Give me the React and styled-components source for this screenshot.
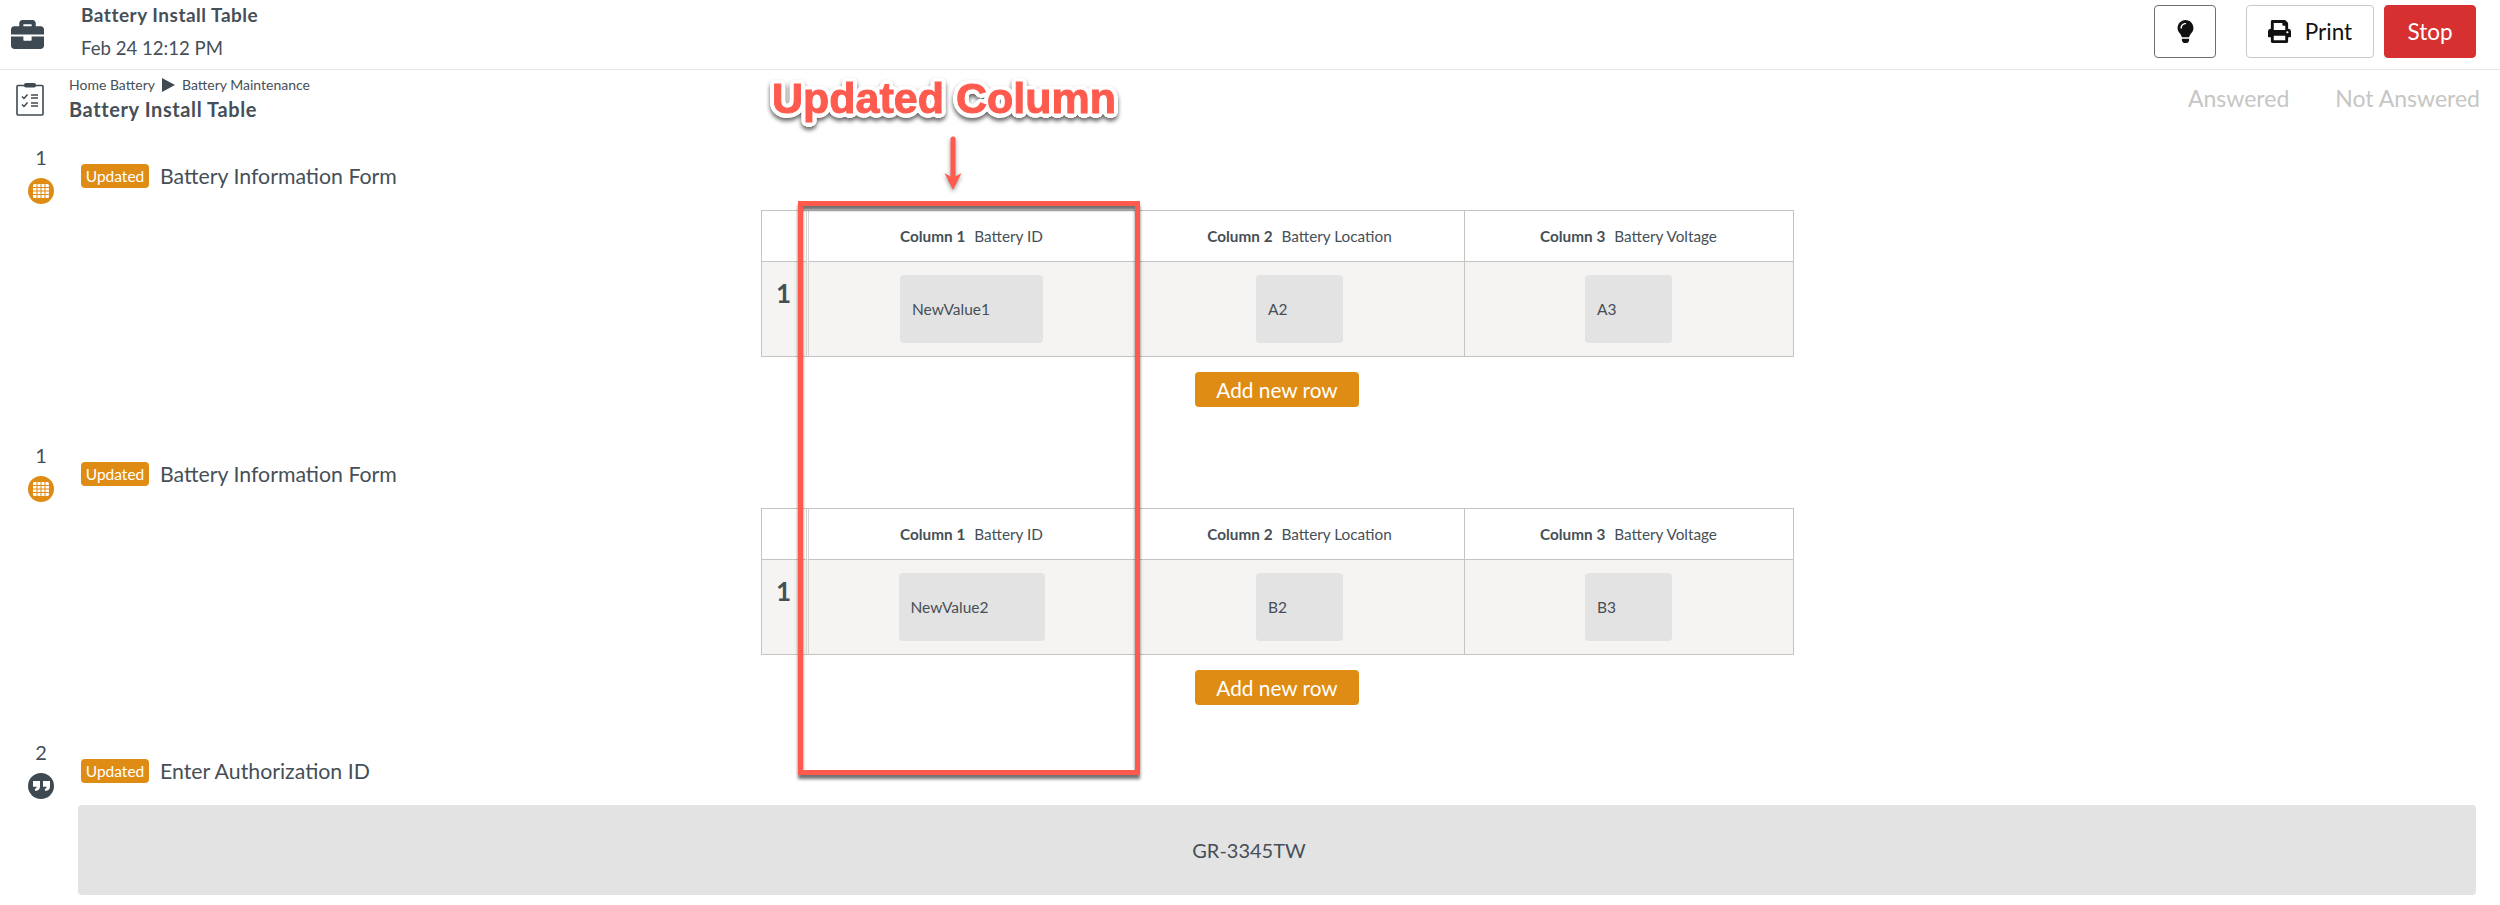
import React from 'react'
import styled, { createGlobalStyle } from 'styled-components'
import { FaBriefcase, FaLightbulb, FaPrint } from 'react-icons/fa'

const GlobalStyle = createGlobalStyle`
    html, body {
        margin: 0;
        padding: 0;
        background: #fff;
    }
    body {
        font-family: 'Lato', 'Liberation Sans', sans-serif;
        color: #464f57;
        overflow: hidden;
    }
`

const Page = styled.div`
    position: relative;
    width: 2500px;
    height: 905px;
`

const Header = styled.header`
    display: flex;
    align-items: center;
    height: 69px;
    border-bottom: 1px solid #e6e6e6;
    padding: 0 24px 0 11px;
`
const HeaderIcon = styled(FaBriefcase)`
    width: 33px;
    height: 33px;
    color: #3f4952;
    margin-right: 37px;
`
const HeaderText = styled.div`
    display: flex;
    flex-direction: column;
    gap: 13px;
    flex: 1;
    margin-top: -6px;
`
const HeaderTitle = styled.div`
    font-size: 19px;
    letter-spacing: 0.5px;
    line-height: 21px;
    font-weight: 700;
`
const HeaderDate = styled.div`
    font-size: 18.6px;
    line-height: 21px;
`
const Actions = styled.div`
    display: flex;
    align-items: center;
    margin-top: -6px;
`
const Button = styled.button`
    display: flex;
    align-items: center;
    justify-content: center;
    gap: 14px;
    height: 53px;
    width: ${p => p.$width}px;
    margin-left: ${p => p.$gap}px;
    box-sizing: border-box;
    border-radius: 4px;
    border: 1px solid ${p => p.$border};
    background: ${p => p.$bg || '#fff'};
    color: ${p => p.$color || '#111'};
    font-family: inherit;
    font-size: 22.5px;
    padding: 0;
`

const SubHeader = styled.div`
    display: flex;
    height: 75px;
    padding: 6px 20px 0 16px;
    box-sizing: border-box;
`
const ChecklistIcon = styled.svg`
    width: 28px;
    height: 34px;
    margin: 6px 25px 0 0;
`
const SubText = styled.div`
    flex: 1;
`
const Crumbs = styled.div`
    display: flex;
    align-items: center;
    gap: 7px;
    font-size: 14px;
    line-height: 17px;
`
const CrumbArrow = styled.span`
    width: 0;
    height: 0;
    border-left: 13px solid #3f4952;
    border-top: 7px solid transparent;
    border-bottom: 7px solid transparent;
`
const SubTitle = styled.div`
    font-size: 20px;
    letter-spacing: 0.6px;
    line-height: 24px;
    font-weight: 700;
    margin-top: 4px;
`
const Legend = styled.div`
    display: flex;
    gap: 46px;
    font-size: 23px;
    color: #c6c6c4;
    padding-top: 8px;
`

const Question = styled.section`
    display: flex;
    padding: 0 24px 0 4px;
    height: ${p => p.$height}px;
`
const Marker = styled.div`
    width: 74px;
    flex-shrink: 0;
    display: flex;
    flex-direction: column;
    align-items: center;
`
const Number = styled.div`
    font-size: 20px;
    line-height: 24px;
`
const Circle = styled.div`
    width: 26px;
    height: 26px;
    margin-top: 9px;
    border-radius: 50%;
    display: flex;
    align-items: center;
    justify-content: center;
    background: ${p => p.$bg};
`
const Content = styled.div`
    flex: 1;
    min-width: 0;
    padding-top: 19px;
`
const TitleRow = styled.div`
    display: flex;
    align-items: center;
    height: 24px;
    padding-left: 3px;
    gap: 11px;
`
const Badge = styled.span`
    background: #df8c14;
    color: #fff;
    border-radius: 4px;
    width: 68px;
    height: 24px;
    display: flex;
    align-items: center;
    justify-content: center;
    font-size: 15.5px;
`
const QuestionTitle = styled.span`
    font-size: 21.3px;
`
const Table = styled.div`
    display: grid;
    grid-template-columns: 44px repeat(3, 1fr);
    grid-template-rows: 51px 94px;
    width: 1033px;
    margin: 22px auto 0;
    box-sizing: border-box;
    border: 1px solid #c4c4c0;
`
const HeadCell = styled.div`
    display: flex;
    align-items: center;
    justify-content: center;
    gap: 9px;
    font-size: 15.3px;
    border-bottom: 1px solid #c4c4c0;
    border-left: ${p => p.$double ? '3px double #d6d6d2' : p.$first ? 'none' : '1px solid #c4c4c0'};
`
const ColumnName = styled.strong`
    font-weight: 700;
`
const RowNumber = styled.div`
    background: #f5f4f2;
    font-size: 26px;
    font-weight: 700;
    text-align: center;
    padding-top: 15px;
`
const BodyCell = styled.div`
    background: #f5f4f2;
    display: flex;
    justify-content: center;
    padding-top: 13px;
    border-left: ${p => p.$double ? '3px double #d6d6d2' : '1px solid #c4c4c0'};
`
const ValueInput = styled.div`
    width: ${p => p.$width}px;
    height: 68px;
    box-sizing: border-box;
    background: #e3e3e3;
    border-radius: 4px;
    padding-left: 12px;
    display: flex;
    align-items: center;
    font-size: 15.5px;
`
const AddButton = styled.button`
    display: block;
    width: 164px;
    height: 35px;
    margin: 15px auto 0;
    border: none;
    border-radius: 4px;
    background: #df8c14;
    color: #fff;
    font-family: inherit;
    font-size: 20.8px;
    padding: 0;
`
const AnswerBox = styled.div`
    height: 90px;
    margin-top: 22px;
    padding-right: 56px;
    background: #e3e3e3;
    border-radius: 4px;
    display: flex;
    align-items: center;
    justify-content: center;
    font-size: 20px;
`

// white outline of the annotation text, drawn all round the letters
const outline = Array.from({ length: 24 }, (_, i) => {
    const a = (i / 24) * 2 * Math.PI
    return `${(Math.cos(a) * 4.5).toFixed(2)}px ${(Math.sin(a) * 4.5).toFixed(2)}px 0 #fff`
}).join(', ')

// screenshot annotation, sits over the page
const CalloutText = styled.div`
    position: absolute;
    left: 772px;
    top: 73px;
    font-family: 'Liberation Sans', Arial, sans-serif;
    font-weight: 700;
    font-size: 43px;
    line-height: 50px;
    color: #fe5a4e;
    -webkit-text-stroke: 1px #fe5a4e;
    text-shadow: ${outline};
    filter: drop-shadow(0 3px 2px rgba(0, 0, 0, 0.6));
`
const CalloutArrow = styled.svg`
    position: absolute;
    left: 941px;
    top: 136px;
    width: 24px;
    height: 58px;
    filter: drop-shadow(0 2px 2px rgba(0, 0, 0, 0.4));
`
const CalloutBox = styled.div`
    position: absolute;
    left: 798px;
    top: 201px;
    width: 342px;
    height: 574px;
    box-sizing: border-box;
    border: 5px solid #fe5a4e;
    box-shadow: 0 4px 3px rgba(0, 0, 0, 0.55), inset 0 4px 3px rgba(0, 0, 0, 0.55);
`

function Checklist() {
    return (
        <ChecklistIcon viewBox="0 0 28 34" fill="none" stroke="#3f4952">
            <rect x="1" y="3.5" width="26" height="29.5" rx="1" strokeWidth="1.6" />
            <rect x="8" y="1" width="12" height="4.5" rx="2" fill="#3f4952" strokeWidth="0" />
            <path d="M6 14.5l2 2 3.5-4M6 22.5l2 2 3.5-4" strokeWidth="1.5" />
            <path d="M15 13h7M15 16h7M15 21h7M15 24h7" strokeWidth="1.5" />
        </ChecklistIcon>
    )
}

function GridIcon() {
    return (
        <svg width="16" height="14" viewBox="0 0 16 14">
            <rect width="16" height="14" rx="1.5" fill="#fff" />
            <path d="M4 0v14M8 0v14M12 0v14M0 3.5h16M0 7h16M0 10.5h16" stroke="#df8c14" strokeWidth="1" />
        </svg>
    )
}

function QuoteIcon() {
    const mark = 'M0 0h7v5.5c0 2.6-1.7 4.3-4.6 4.5L1.6 8c1.3-.2 2-.9 2.1-2.2H0z'
    return (
        <svg width="17" height="10" viewBox="0 0 17 10" fill="#fff">
            <path d={mark} />
            <path d={mark} transform="translate(10 0)" />
        </svg>
    )
}

function BatteryTable({ values }) {
    const names = ['Battery ID', 'Battery Location', 'Battery Voltage']
    return (
        <>
            <Table>
                <HeadCell $first />
                {names.map((name, i) => (
                    <HeadCell key={name} $double={i === 0}>
                        <ColumnName>Column {i + 1}</ColumnName> {name}
                    </HeadCell>
                ))}
                <RowNumber>1</RowNumber>
                {values.map((v, i) => (
                    <BodyCell key={v.text} $double={i === 0}>
                        <ValueInput $width={v.width}>{v.text}</ValueInput>
                    </BodyCell>
                ))}
            </Table>
            <AddButton>Add new row</AddButton>
        </>
    )
}

function TitleLine({ children }) {
    return (
        <TitleRow>
            <Badge>Updated</Badge>
            <QuestionTitle>{children}</QuestionTitle>
        </TitleRow>
    )
}

export default function App() {
    return (
        <Page>
            <GlobalStyle />
            <Header>
                <HeaderIcon />
                <HeaderText>
                    <HeaderTitle>Battery Install Table</HeaderTitle>
                    <HeaderDate>Feb 24 12:12 PM</HeaderDate>
                </HeaderText>
                <Actions>
                    <Button $width={62} $gap={0} $border="#6e6e6e"><FaLightbulb size={23} /></Button>
                    <Button $width={128} $gap={30} $border="#c9c9c5"><FaPrint size={23} />Print</Button>
                    <Button $width={92} $gap={10} $border="#d63031" $bg="#d63031" $color="#fff">Stop</Button>
                </Actions>
            </Header>
            <SubHeader>
                <Checklist />
                <SubText>
                    <Crumbs>Home Battery <CrumbArrow /> Battery Maintenance</Crumbs>
                    <SubTitle>Battery Install Table</SubTitle>
                </SubText>
                <Legend>
                    <span>Answered</span>
                    <span>Not Answered</span>
                </Legend>
            </SubHeader>
            <Question $height={298}>
                <Marker>
                    <Number>1</Number>
                    <Circle $bg="#df8c14"><GridIcon /></Circle>
                </Marker>
                <Content>
                    <TitleLine>Battery Information Form</TitleLine>
                    <BatteryTable values={[
                        { text: 'NewValue1', width: 143 },
                        { text: 'A2', width: 87 },
                        { text: 'A3', width: 87 },
                    ]} />
                </Content>
            </Question>
            <Question $height={297}>
                <Marker>
                    <Number>1</Number>
                    <Circle $bg="#df8c14"><GridIcon /></Circle>
                </Marker>
                <Content>
                    <TitleLine>Battery Information Form</TitleLine>
                    <BatteryTable values={[
                        { text: 'NewValue2', width: 146 },
                        { text: 'B2', width: 87 },
                        { text: 'B3', width: 87 },
                    ]} />
                </Content>
            </Question>
            <Question $height={150}>
                <Marker>
                    <Number>2</Number>
                    <Circle $bg="#3f4952"><QuoteIcon /></Circle>
                </Marker>
                <Content>
                    <TitleLine>Enter Authorization ID</TitleLine>
                    <AnswerBox>GR-3345TW</AnswerBox>
                </Content>
            </Question>
            <CalloutText>Updated Column</CalloutText>
            <CalloutArrow viewBox="0 0 24 58">
                <path d="M12 3v40" stroke="#fe5a4e" strokeWidth="5" strokeLinecap="round" />
                <path d="M3.5 37l8.5 5 8.5-5-8.5 17z" fill="#fe5a4e" />
            </CalloutArrow>
            <CalloutBox />
        </Page>
    )
}
